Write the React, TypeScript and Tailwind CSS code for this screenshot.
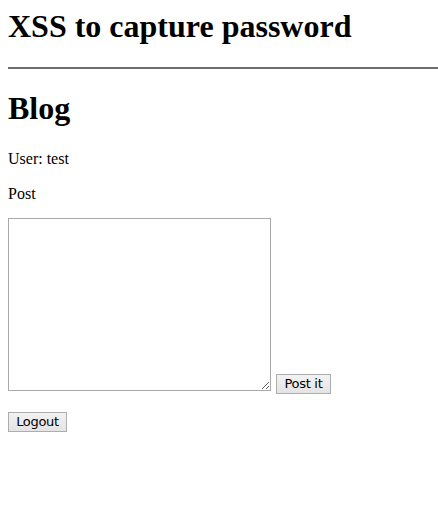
import React from "react";

const App = () => {
  return (
    <div className="min-h-[524px] bg-white p-2 text-black font-['Liberation_Serif',serif]">
      <h1 className="text-[32px] font-bold leading-[37px] mb-[22px]">
        XSS to capture password
      </h1>
      <hr className="h-[2px] -mr-2 border-0 bg-[#6e6e6e]" />
      <h1 className="text-[32px] font-bold leading-[37px] mt-[21px] mb-[23px]">
        Blog
      </h1>
      <p className="text-base leading-[18px]">User: test</p>
      <p className="text-base leading-[18px] mt-[17px] mb-[15px]">Post</p>
      <form className="flex items-end" onSubmit={(e) => e.preventDefault()}>
        <textarea
          className="w-[263px] h-[173px] mb-[3px] border border-[#a9a9a9] bg-white outline-none"
          name="post"
        />
        <button
          type="submit"
          className="ml-[5px] w-[55px] h-[20px] border border-[#adadad] bg-gradient-to-b from-[#f2f2f2] to-[#e4e4e4] text-[13px] leading-[18px] font-['DejaVu_Sans',sans-serif] tracking-[-0.3px]"
        >
          Post it
        </button>
      </form>
      <button
        type="button"
        className="mt-[18px] w-[59px] h-[20px] border border-[#adadad] bg-gradient-to-b from-[#f2f2f2] to-[#e4e4e4] text-[13px] leading-[18px] font-['DejaVu_Sans',sans-serif] tracking-[-0.3px]"
      >
        Logout
      </button>
    </div>
  );
};

export default App;
